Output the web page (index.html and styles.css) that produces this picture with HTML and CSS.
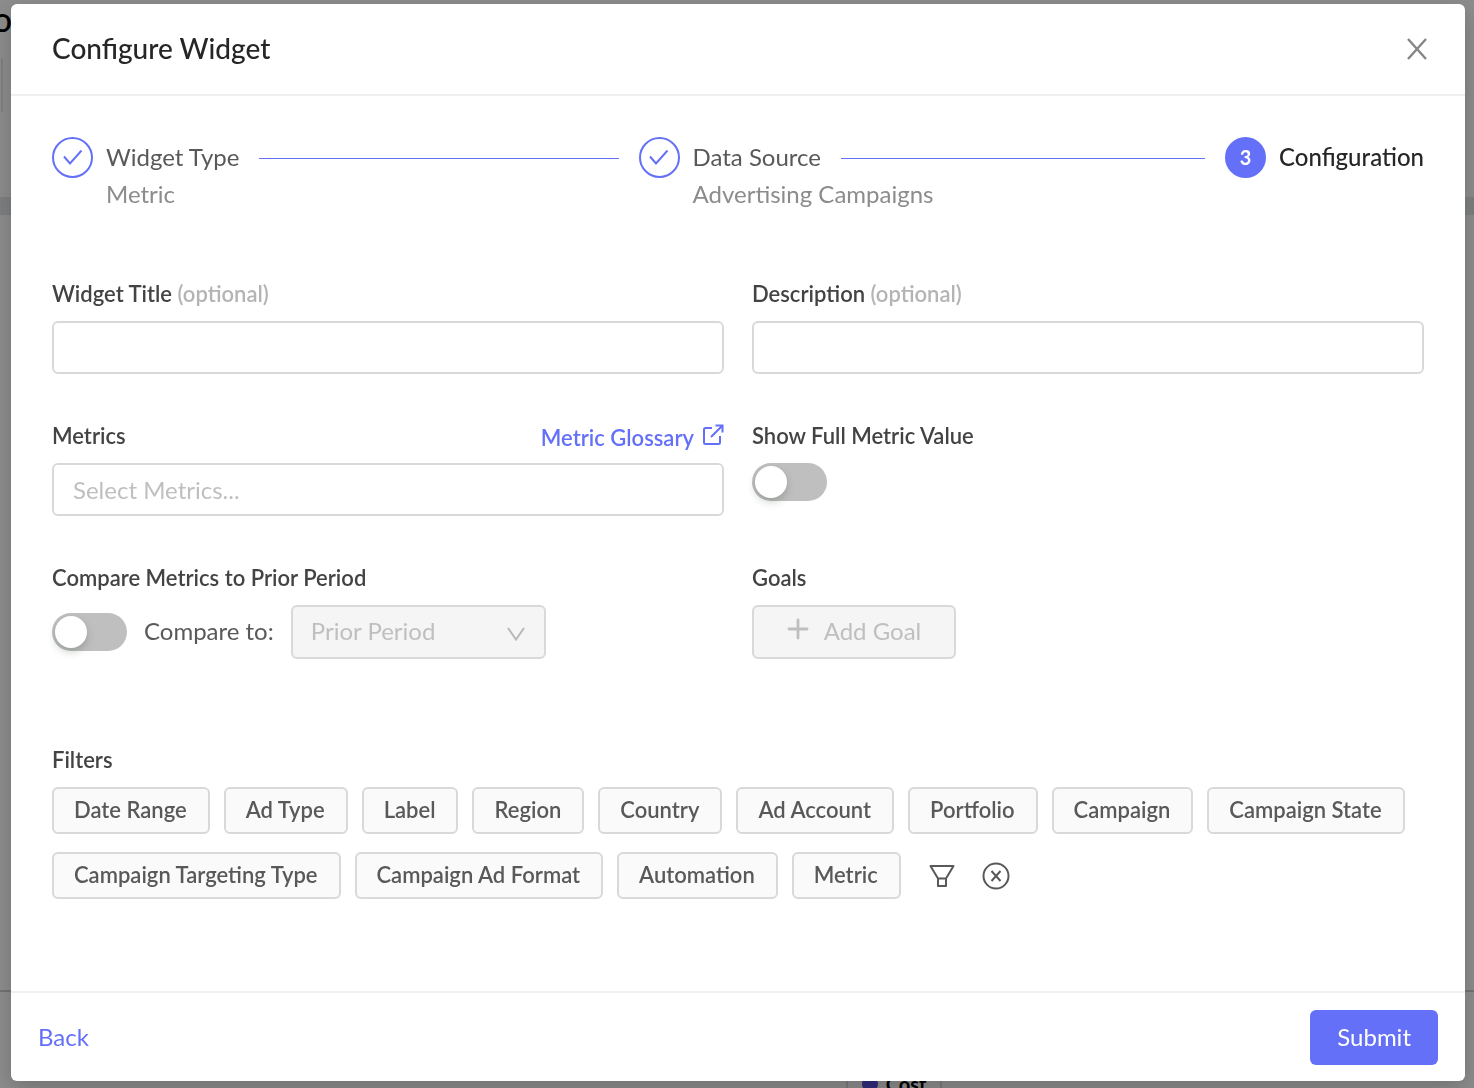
FILE: index.html
```html
<!DOCTYPE html>
<html lang="en">
<head>
<meta charset="utf-8">
<title>Configure Widget</title>
<meta name="viewport" content="width=device-width, initial-scale=1">
<link rel="stylesheet" href="styles.css">
</head>
<body>
<div class="page">
  <header class="page-header">
    <span class="page-title">o</span>
    <div class="page-tab"></div>
  </header>
  <div class="page-band"></div>
  <div class="page-panel"></div>
  <div class="page-chart">
    <span class="legend"><span class="legend-dot"></span>Cost</span>
  </div>
</div>

<div class="backdrop">
  <form class="modal" role="dialog" aria-modal="true" aria-labelledby="modal-title">
    <header class="modal-header">
      <h1 class="modal-title" id="modal-title">Configure Widget</h1>
      <button class="icon-button" type="button" aria-label="Close">
        <svg width="20" height="22" viewBox="0 0 20 22" fill="none" stroke="#868686" stroke-width="2.400"><path d="M1 1l18 20M19 1L1 21"/></svg>
      </button>
    </header>

    <div class="modal-body">
      <ol class="steps">
        <li class="step">
          <span class="step-icon"><svg width="20" height="16" viewBox="0 0 20 16" fill="none" stroke="currentColor" stroke-width="2"><path d="M1 6.500l6 7L18.500 0.500"/></svg></span>
          <span class="step-title">Widget Type</span>
          <span class="step-text">Metric</span>
        </li>
        <li class="step">
          <span class="step-icon"><svg width="20" height="16" viewBox="0 0 20 16" fill="none" stroke="currentColor" stroke-width="2"><path d="M1 6.500l6 7L18.500 0.500"/></svg></span>
          <span class="step-title">Data Source</span>
          <span class="step-text">Advertising Campaigns</span>
        </li>
        <li class="step step-current" aria-current="step">
          <span class="step-icon">3</span>
          <span class="step-title">Configuration</span>
        </li>
      </ol>

      <div class="fields">
        <div class="field">
          <label class="label" for="widget-title">Widget Title <span class="optional">(optional)</span></label>
          <input class="input" id="widget-title" type="text">
        </div>
        <div class="field">
          <label class="label" for="description">Description <span class="optional">(optional)</span></label>
          <input class="input" id="description" type="text">
        </div>
        <div class="field">
          <div class="label-row">
            <label class="label" for="metrics">Metrics</label>
            <a class="glossary" href="#glossary">Metric Glossary
              <svg width="22" height="22" viewBox="0 0 22 22" fill="none" stroke="currentColor" stroke-width="2"><path d="M10 4H3.500a1.500 1.500 0 0 0-1.500 1.500v13A1.500 1.500 0 0 0 3.500 20h13a1.500 1.500 0 0 0 1.500-1.500V12M9 13L20 2M13.500 1.500h7v7"/></svg>
            </a>
          </div>
          <input class="input" id="metrics" type="text" placeholder="Select Metrics...">
        </div>
        <div class="field">
          <label class="label" for="full-value">Show Full Metric Value</label>
          <input class="switch" id="full-value" type="checkbox" role="switch">
        </div>
        <div class="field">
          <label class="label" for="compare">Compare Metrics to Prior Period</label>
          <div class="compare">
            <input class="switch" id="compare" type="checkbox" role="switch">
            <label class="compare-label" for="period">Compare to:</label>
            <span class="select-box">
              <select class="select" id="period" disabled><option>Prior Period</option></select>
              <svg class="select-arrow" width="18" height="14" viewBox="0 0 18 14" fill="none" stroke="#b8b8b8" stroke-width="2"><path d="M1 1l8 11.500L17 1"/></svg>
            </span>
          </div>
        </div>
        <div class="field">
          <span class="label">Goals</span>
          <button class="add-goal" type="button" disabled>
            <svg width="22" height="22" viewBox="0 0 22 22" fill="none" stroke="currentColor" stroke-width="2.800" stroke-linecap="round"><path d="M11 2v18M2 11h18"/></svg>
            Add Goal
          </button>
        </div>
      </div>

      <section class="filters">
        <h2 class="label">Filters</h2>
        <div class="chips">
          <button class="chip" type="button">Date Range</button>
          <button class="chip" type="button">Ad Type</button>
          <button class="chip" type="button">Label</button>
          <button class="chip" type="button">Region</button>
          <button class="chip" type="button">Country</button>
          <button class="chip" type="button">Ad Account</button>
          <button class="chip" type="button">Portfolio</button>
          <button class="chip" type="button">Campaign</button>
          <button class="chip" type="button">Campaign State</button>
          <button class="chip" type="button">Campaign Targeting Type</button>
          <button class="chip" type="button">Campaign Ad Format</button>
          <button class="chip" type="button">Automation</button>
          <button class="chip" type="button">Metric</button>
          <span class="chip-tools">
            <button class="icon-button" type="button" aria-label="Filter">
              <svg width="26" height="24" viewBox="0 0 26 24" fill="none" stroke="#595959" stroke-width="2" stroke-linejoin="round"><path d="M1.500 2h23L17 14.500V22H9v-7.500zM9 14.500h8"/></svg>
            </button>
            <button class="icon-button" type="button" aria-label="Clear filters">
              <svg width="28" height="28" viewBox="0 0 28 28" fill="none" stroke="#595959" stroke-width="2"><circle cx="14" cy="14" r="12.500"/><path d="M9.500 9l9 10M18.500 9l-9 10"/></svg>
            </button>
          </span>
        </div>
      </section>
    </div>

    <footer class="modal-footer">
      <button class="back" type="button">Back</button>
      <button class="submit" type="submit">Submit</button>
    </footer>
  </form>
</div>
</body>
</html>
```
FILE: styles.css
```css
* {
  box-sizing: border-box;
}

body {
  margin: 0;
  font-family: Lato, "Liberation Sans", sans-serif;
  font-size: 24px;
  line-height: 32px;
  color: #595959;
}

button,
input,
select {
  margin: 0;
  font: inherit;
}

button {
  cursor: pointer;
}

svg {
  display: block;
  flex: none;
}

/* Dashboard behind the dialog */
.page {
  display: flex;
  flex-direction: column;
  height: 100vh;
  overflow: hidden;
  background: #fff;
}

.page-header {
  height: 197px;
}

.page-title {
  display: block;
  width: 12px;
  direction: rtl;
  font-size: 34px;
  line-height: 38px;
  font-weight: 500;
  color: #000;
}

.page-tab {
  width: 3px;
  height: 54px;
  margin-top: 20px;
  border-right: 2px solid #e8e8e8;
}

.page-band {
  height: 18px;
  background: #e4e7eb;
}

.page-panel {
  flex: 1;
  border-bottom: 2px solid #d0d0d0;
}

.page-chart {
  display: flex;
  justify-content: center;
  align-items: flex-start;
  height: 96px;
  padding: 72px 0 0 314px;
}

.legend {
  display: flex;
  align-items: center;
  gap: 8px;
  height: 40px;
  padding: 0 14px;
  border: 2px solid #e0e0e0;
  font-size: 20px;
  font-weight: 700;
  color: #000;
}

.legend-dot {
  width: 16px;
  height: 16px;
  border-radius: 50%;
  background: #5a50e0;
}

/* Dialog */
.backdrop {
  position: fixed;
  inset: 0;
  padding: 4px 9px 7px 11px;
  background: rgba(0, 0, 0, 0.45);
}

.modal {
  display: flex;
  flex-direction: column;
  min-height: 100%;
  border-radius: 6px;
  background: #fff;
  box-shadow: 0 8px 24px rgba(0, 0, 0, 0.2);
}

.modal-header {
  display: flex;
  justify-content: space-between;
  align-items: center;
  height: 92px;
  padding: 0 38px 0 41px;
  border-bottom: 2px solid #f0f0f0;
}

.modal-title {
  margin: 0;
  padding-bottom: 3px;
  font-size: 28px;
  font-weight: 500;
  color: #262626;
}

.icon-button {
  padding: 0;
  border: 0;
  background: none;
}

.modal-body {
  flex: 1;
  padding: 41px;
}

/* Steps */
.steps {
  display: flex;
  gap: 20px;
  margin: 0 0 68px;
  padding: 0;
  list-style: none;
}

.step {
  display: grid;
  grid-template-columns: 41px 1fr;
  column-gap: 13px;
  flex: 1;
  align-content: start;
}

.step-icon {
  display: flex;
  justify-content: center;
  align-items: center;
  height: 41px;
  border: 2px solid #6470f7;
  border-radius: 50%;
  color: #6470f7;
}

.step-title {
  display: flex;
  align-items: center;
  gap: 20px;
  padding-bottom: 2px;
}

.step-title::after {
  content: "";
  flex: 1;
  height: 1px;
  margin-top: 4px;
  background: #6470f7;
}

.step-text {
  grid-column: 2;
  color: #8c8c8c;
}

.step-current {
  flex: none;
}

.step-current .step-icon {
  padding-bottom: 2px;
  background: #6470f7;
  font-size: 20px;
  font-weight: 700;
  color: #fff;
}

.step-current .step-title {
  font-weight: 500;
  color: #262626;
}

.step-current .step-title::after {
  content: none;
}

/* Fields */
.fields {
  display: grid;
  grid-template-columns: 1fr 1fr;
  gap: 46px 28px;
}

.label {
  display: block;
  margin: 0 0 11px;
  font-size: 22px;
  font-weight: 600;
  color: #434343;
}

.optional {
  color: #b4b4b4;
}

.label-row {
  display: flex;
  justify-content: space-between;
}

.glossary {
  display: flex;
  gap: 8px;
  font-size: 22px;
  line-height: 36px;
  font-weight: 600;
  color: #6470f7;
  text-decoration: none;
}

.glossary svg {
  margin-top: 4px;
}

.input {
  display: block;
  width: 100%;
  height: 53px;
  padding: 0 19px;
  border: 2px solid #d9d9d9;
  border-radius: 6px;
  background: #fff;
  color: #434343;
}

.input::placeholder {
  color: #bfbfbf;
  opacity: 1;
}

.switch {
  display: block;
  flex: none;
  appearance: none;
  width: 75px;
  height: 38px;
  padding: 3px;
  border-radius: 19px;
  background: #bfbfbf;
}

.switch::before {
  content: "";
  display: block;
  width: 32px;
  height: 32px;
  border-radius: 50%;
  background: #fff;
  box-shadow: 0 4px 8px rgba(0, 35, 11, 0.2);
}

.switch:checked {
  background: #6470f7;
}

.compare {
  display: flex;
  align-items: center;
  gap: 17px;
}

.compare-label {
  padding-bottom: 3px;
}

.select-box {
  position: relative;
  width: 255px;
}

.select {
  display: block;
  appearance: none;
  width: 100%;
  height: 54px;
  padding: 0 18px 3px;
  border: 2px solid #d9d9d9;
  border-radius: 6px;
  background: #f5f5f5;
  color: #bfbfbf;
  opacity: 1;
}

.select-arrow {
  position: absolute;
  right: 21px;
  top: 22px;
}

.add-goal {
  display: flex;
  justify-content: center;
  align-items: center;
  gap: 15px;
  width: 204px;
  height: 54px;
  padding-bottom: 3px;
  border: 2px solid #d9d9d9;
  border-radius: 6px;
  background: #f5f5f5;
  color: #bfbfbf;
}

.add-goal svg {
  margin-bottom: 4px;
}

/* Filters */
.filters {
  margin-top: 85px;
}

.chips {
  display: flex;
  flex-wrap: wrap;
  gap: 18px 14px;
}

.chip {
  height: 47px;
  padding: 0 21px 2px 20px;
  border: 2px solid #d9d9d9;
  border-radius: 6px;
  background: #fafafa;
  font-size: 22px;
  font-weight: 600;
  color: #595959;
}

.chip-tools {
  display: flex;
  align-items: center;
  gap: 27px;
  padding-left: 14px;
}

/* Footer */
.modal-footer {
  display: flex;
  justify-content: space-between;
  align-items: center;
  height: 90px;
  padding: 0 27px;
  border-top: 2px solid #f0f0f0;
}

.back {
  padding: 0;
  border: 0;
  background: none;
  color: #6470f7;
}

.submit {
  height: 55px;
  padding: 0 27px;
  border: 0;
  border-radius: 6px;
  background: #6470f7;
  color: #fff;
}
```
